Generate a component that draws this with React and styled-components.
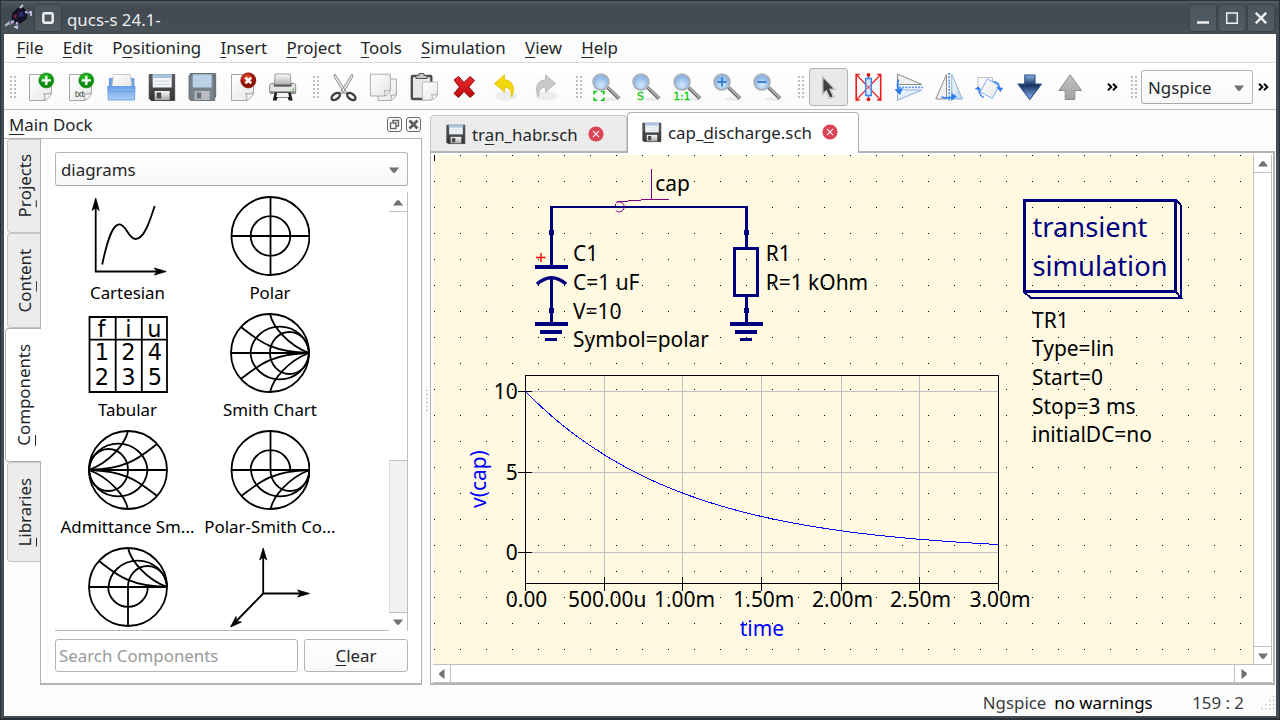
import React from "react";
import styled, { createGlobalStyle, css } from "styled-components";

const GlobalStyle = createGlobalStyle`
  * { box-sizing: border-box; }
  html, body { margin: 0; padding: 0; }
  body { font-family: "Noto Sans", sans-serif; font-size: 16.87px; line-height: 24px; color: #232629; }
  svg { display: block; flex: none; }
`;

/* ---------- window frame ---------- */

const Window = styled.div`
  width: 1280px;
  height: 720px;
  overflow: hidden;
  display: flex;
  flex-direction: column;
  background: #434d55;
  border: 1px solid #2a3036;
  border-bottom-width: 2px;
`;

const TitleBar = styled.header`
  flex: none;
  height: 33px;
  display: flex;
  align-items: center;
  padding: 0 4px 0 4px;
  background: linear-gradient(#59626a 0, #4a535b 2px, #41484f 9px, #485057 32px, #343b41 33px);
`;

const TitleButton = styled.div`
  width: 28px;
  height: 28px;
  margin-left: 1px;
  margin-top: 1px;
  border: 1px solid #3a444b;
  border-radius: 3px;
  background: linear-gradient(#4b555d, #515c64);
  display: flex;
  align-items: center;
  justify-content: center;
`;

const WindowTitle = styled.div`
  flex: 1;
  padding: 4px 0 0 5px;
  color: #eceef0;
`;

const Client = styled.div`
  flex: 1;
  margin: 0 3px 2px;
  display: flex;
  flex-direction: column;
  background: #fcfcfc;
  min-height: 0;
`;

/* ---------- menu ---------- */

const MenuBar = styled.nav`
  flex: none;
  height: 29px;
  display: flex;
  gap: 19.25px;
  padding: 2px 0 0 12.5px;
  border-bottom: 1px solid #dcdcdc;
`;

const Mnemonic = styled.span`
  text-decoration: underline;
  text-decoration-thickness: 1px;
  text-underline-offset: 3px;
  text-decoration-skip-ink: none;
`;

/* ---------- toolbar ---------- */

const ToolBars = styled.div`
  flex: none;
  height: 47px;
  display: flex;
  background: linear-gradient(#ffffff, #fafafa);
  border-bottom: 1px solid #bcbcbc;
`;

const ToolGroup = styled.div`
  width: ${(p) => p.$width}px;
  flex: none;
  display: flex;
  align-items: center;
  padding: 2px ${(p) => p.$right ?? 0}px 0 6px;
`;

const Grip = styled.div`
  width: 6px;
  height: 22px;
  margin-right: ${(p) => p.$after}px;
  background: radial-gradient(circle at 1px 1px, #bdbdbd 0.9px, transparent 1.2px) 0 0 / 4px 4px;
`;

const ToolButton = styled.div`
  width: 40.3px;
  height: 38px;
  flex: none;
  display: flex;
  align-items: center;
  justify-content: center;
  ${(p) =>
    p.$active &&
    css`
      width: 39px;
      margin: 0 0 0 1.3px;
      border: 1px solid #b4b4b4;
      border-radius: 3px;
      background: #e9e9e9;
    `}
`;

const Combo = styled.div`
  height: 34px;
  width: ${(p) => p.$width}px;
  flex: none;
  display: flex;
  align-items: center;
  justify-content: space-between;
  padding: 1px 8px 0 ${(p) => p.$pad ?? 6}px;
  border: 1px solid #b4b4b4;
  border-bottom-color: #a8a8a8;
  border-radius: 3px;
  background: linear-gradient(#ffffff, #f8f8f8);
`;

/* ---------- body ---------- */

const Body = styled.main`
  flex: 1;
  display: flex;
  min-height: 0;
`;

const Dock = styled.aside`
  width: 418px;
  flex: none;
  display: flex;
  flex-direction: column;
`;

const DockTitle = styled.div`
  height: 28px;
  flex: none;
  display: flex;
  align-items: center;
  padding: 1px 1px 0 5px;
`;

const DockName = styled.div`
  flex: 1;
  padding-top: 1px;
`;

const DockButton = styled.div`
  width: 15px;
  height: 15px;
  margin-left: 4px;
  border: 1px solid #6a6a6a;
  border-radius: 3px;
  display: flex;
  align-items: center;
  justify-content: center;
`;

const DockBody = styled.div`
  display: flex;
  height: 547px;
`;

const SideTabs = styled.div`
  width: 36px;
  flex: none;
  display: flex;
  flex-direction: column;
  align-items: flex-end;
  border-top: 1px solid #b4b4b4;
`;

const SideTab = styled.div`
  height: ${(p) => p.$height}px;
  width: ${(p) => (p.$active ? 36 : 33)}px;
  flex: none;
  display: flex;
  align-items: center;
  justify-content: center;
  border: 1px solid ${(p) => (p.$active ? "#b0b0b0" : "#c6c6c6")};
  border-right: 0;
  border-radius: 4px 0 0 4px;
  background: ${(p) => (p.$active ? "#ffffff" : "#ececec")};
  margin-right: ${(p) => (p.$active ? -1 : 0)}px;
  z-index: 1;
  padding-left: ${(p) => (p.$active ? 0 : 2)}px;
`;

const SideLabel = styled.span`
  writing-mode: vertical-rl;
  transform: rotate(180deg);
`;

const DockPane = styled.div`
  flex: 1;
  display: flex;
  flex-direction: column;
  background: #fff;
  border: 1px solid #b4b4b4;
  border-bottom: 2px solid #b4b4b4;
  padding: 13px 13px 10px 14px;
`;

const ListArea = styled.div`
  display: flex;
  height: 439px;
  margin: 6px 0 8px;
`;

const ComponentGrid = styled.div`
  width: 334px;
  padding: 2px 0 0 1px;
  overflow: hidden;
  display: grid;
  grid-template-columns: 143px 142px;
  grid-auto-rows: 117px;
  border-bottom: 1px solid #b8b8b8;
  color: #000;
`;

const ComponentItem = styled.div`
  display: flex;
  flex-direction: column;
  align-items: center;
  white-space: nowrap;
  padding-top: 2px;
`;

const ComponentLabel = styled.div`
  padding-top: 5px;
`;

const VScroll = styled.div`
  width: 19px;
  flex: none;
  display: flex;
  flex-direction: column;
  border-right: 1px solid #c0c0c0;
  border-left: ${(p) => (p.$line ? "1px solid #c0c0c0" : "0")};
  background: #fff;
`;

const ScrollStep = styled.div`
  height: ${(p) => p.$height}px;
  flex: none;
  display: flex;
  align-items: center;
  justify-content: center;
  border: 0 solid #c0c0c0;
  border-${(p) => p.$edge}-width: 1px;
  padding-top: ${(p) => p.$shift ?? 0}px;
`;

const ScrollThumb = styled.div`
  height: ${(p) => p.$height}px;
  background: #f1f1f1;
  border-top: 1px solid #c0c0c0;
  border-left: 1px solid #dcdcdc;
`;

const Spacer = styled.div`
  flex: 1;
`;

const SearchRow = styled.div`
  display: flex;
  gap: 6px;
`;

const SearchField = styled.div`
  width: 243px;
  height: 33px;
  border: 1px solid #b4b4b4;
  border-radius: 3px;
  padding: 4px 3px;
  color: #9a9a9a;
`;

const PushButton = styled.div`
  width: 104px;
  height: 33px;
  border: 1px solid #b4b4b4;
  border-radius: 3px;
  background: linear-gradient(#fff, #f8f8f8);
  display: flex;
  align-items: center;
  justify-content: center;
`;

const Splitter = styled.div`
  width: 8px;
  flex: none;
  display: flex;
  justify-content: center;
  padding: 280px 0 0 2px;
`;

const SplitGrip = styled.div`
  width: 2px;
  height: 21px;
  background: repeating-linear-gradient(#bdbdbd 0 1px, transparent 1px 4px);
`;

const Editor = styled.section`
  flex: 1;
  display: flex;
  flex-direction: column;
  min-width: 0;
`;

const TabRow = styled.div`
  height: 41px;
  flex: none;
  display: flex;
  align-items: flex-end;
`;

const FileTab = styled.div`
  width: ${(p) => p.$width}px;
  height: ${(p) => (p.$active ? 41 : 36)}px;
  display: flex;
  align-items: center;
  padding: 0 0 ${(p) => (p.$active ? 2 : 0)}px ${(p) => (p.$active ? 14 : 15)}px;
  border: 1px solid ${(p) => (p.$active ? "#b0b0b0" : "#c6c6c6")};
  border-bottom: 0;
  border-radius: 4px 4px 0 0;
  background: ${(p) => (p.$active ? "#ffffff" : "#ececec")};
  margin-bottom: ${(p) => (p.$active ? -2 : 0)}px;
  z-index: ${(p) => (p.$active ? 1 : 0)};
`;

const FileName = styled.span`
  padding: 2px 10px 0 6px;
`;

const EditorPane = styled.div`
  width: 845px;
  height: 534px;
  flex: none;
  display: flex;
  flex-direction: column;
  background: #fff;
  border: 2px solid #b4b4b4;
  border-left-width: 1px;
  padding: 2px 1px 0 2px;
`;

const CanvasRow = styled.div`
  display: flex;
  height: 509px;
  flex: none;
`;

const HScroll = styled.div`
  flex: 1;
  display: flex;
  border-top: 1px solid #c0c0c0;
  border-bottom: 1px solid #c0c0c0;
`;

const HStep = styled.div`
  width: 18px;
  display: flex;
  align-items: center;
  justify-content: center;
  border: 0 solid #c0c0c0;
  border-${(p) => p.$edge}-width: 1px;
`;

const ScrollCorner = styled.div`
  width: 20px;
`;

const StatusBar = styled.footer`
  height: 30px;
  flex: none;
  display: flex;
  align-items: center;
  justify-content: flex-end;
  padding: 4px 1px 0 0;
`;

const StatusText = styled.span`
  margin-right: ${(p) => p.$after}px;
  color: ${(p) => (p.$strong ? "#000" : "#3a3d40")};
`;

/* ---------- shared gradients ---------- */

const Defs = styled.svg`
  position: absolute;
`;

const stops = (a, b) => (
  <>
    <stop offset="0" stopColor={a} />
    <stop offset="1" stopColor={b} />
  </>
);

const Gradients = () => (
  <Defs width="0" height="0">
    <defs>
      <linearGradient id="page" x1="0" y1="0" x2="1" y2="1">{stops("#ffffff", "#e6e6e6")}</linearGradient>
      <radialGradient id="green" cx="0.45" cy="0.3">{stops("#2cc628", "#0a8e0c")}</radialGradient>
      <radialGradient id="red" cx="0.4" cy="0.3">{stops("#f0502a", "#8d0c04")}</radialGradient>
      <linearGradient id="tray" x1="0" y1="0" x2="0" y2="1">{stops("#6ca2e8", "#a9cdf8")}</linearGradient>
      <linearGradient id="dark" x1="0" y1="0" x2="0" y2="1">{stops("#5e5e5e", "#333333")}</linearGradient>
      <linearGradient id="silver" x1="0" y1="0" x2="0" y2="1">{stops("#fafafa", "#a9a9a9")}</linearGradient>
      <radialGradient id="lens" cx="0.5" cy="0.7">{stops("#d6e9fb", "#8fb9e8")}</radialGradient>
      <linearGradient id="cross" x1="0" y1="0" x2="0" y2="1">{stops("#f0282a", "#b80c10")}</linearGradient>
      <linearGradient id="blueArrow" x1="0" y1="0" x2="0" y2="1">
        <stop offset="0" stopColor="#8ab0dc" />
        <stop offset=".42" stopColor="#16335f" />
        <stop offset="1" stopColor="#8ab8ff" />
      </linearGradient>
      <linearGradient id="greyArrow" x1="0" y1="0" x2="0" y2="1">{stops("#c2c2c2", "#a2a2a2")}</linearGradient>
      <linearGradient id="sky" x1="0" y1="0" x2="1" y2="1">{stops("#ffffff", "#b9d3f0")}</linearGradient>
    </defs>
  </Defs>
);

/* ---------- toolbar icons ---------- */

const Icon = ({ children, size = 28 }) => (
  <svg width={size} height={size} viewBox="0 0 28 28" fill="none" overflow="visible">
    {children}
  </svg>
);

const PageShape = () => (
  <>
    <path d="M1.5 1.5H23.5V20L16 27.5H1.5Z" fill="url(#page)" stroke="#a8a8a8" />
    <path d="M16 27.5C17.5 24.5 17 22 15.5 20.5C19 21.5 22 21 23.5 19.5C23 23 19.5 26.8 16 27.5Z" fill="#f4f4f4" stroke="#8e8e8e" strokeWidth=".8" />
  </>
);

const NewIcon = ({ txt }) => (
  <Icon>
    <PageShape />
    {txt && <text x="7" y="24" fontSize="8.5" fill="#333" fontFamily="Liberation Sans">txt</text>}
    <circle cx="18.3" cy="7.4" r="7.5" fill="url(#green)" stroke="#0b860c" strokeWidth=".6" />
    <path d="M18.3 2.8V12M13.7 7.4H22.9" stroke="#fff" strokeWidth="2.4" />
  </Icon>
);

const OpenIcon = () => (
  <Icon>
    <g transform="translate(-1.6 0)">
      <path d="M2 5.5H8V16H2ZM20 5.5H26.5V16H20Z" fill="#6ea3e6" stroke="#4f8ad8" strokeWidth=".8" />
      <path d="M6 1.5H23L24.5 14H4.5Z" fill="url(#page)" stroke="#bdbdbd" strokeWidth=".8" />
      <path d="M.3 13.5H27.7L27 27H1Z" fill="url(#tray)" stroke="#5b93df" strokeWidth=".8" />
      <path d="M1.5 18.5H26.5" stroke="#5a94e2" opacity=".5" />
    </g>
  </Icon>
);

const Floppy = ({ blue, size }) => (
  <Icon size={size}>
    <g transform={size ? undefined : "translate(-.8 0)"}>
      {blue && <path d="M2 .5H27.5V24H2Z" fill="#7e8890" stroke="#555c62" strokeWidth=".8" />}
      <path d={blue ? "M.8 2.5H26.5V27.5H2.5L.8 25.8Z" : "M1 1.5H26.5V27.5H2.8L1 25.7Z"} fill={blue ? "#78828a" : "url(#dark)"} stroke={blue ? "#5c646b" : "#3b3b3b"} strokeWidth=".8" />
      <path d="M4.5 1.5H23.5V14.5H4.5Z" fill={blue ? "#b9d0e6" : "#f1f5f9"} />
      {!blue && <path d="M4.5 1.5H23.5V5H4.5Z" fill="#a8c3de" />}
      {!blue && <path d="M6.5 8H21.5M6.5 11.5H21.5" stroke="#cfd6dd" />}
      <path d="M6.5 18H21.5V27H6.5Z" fill={blue ? "#b8bcc0" : "url(#silver)"} />
      <path d="M8.5 19.5H13V25.5H8.5Z" fill={blue ? "#6a7178" : "#4a4a4a"} />
    </g>
  </Icon>
);

const ClosePageIcon = () => (
  <Icon>
    <PageShape />
    <circle cx="18.3" cy="7.4" r="7.6" fill="url(#red)" stroke="#8c1208" strokeWidth=".6" />
    <path d="M15.4 4.5L21.2 10.3M21.2 4.5L15.4 10.3" stroke="#fff" strokeWidth="2.6" />
  </Icon>
);

const PrintIcon = () => (
  <Icon>
    <g transform="translate(-1.3 0)">
      <path d="M6.5 1H21.5L22.5 13H5.5Z" fill="url(#silver)" stroke="#8a8a8a" strokeWidth=".8" />
      <path d="M1 12.5C1 11 2 10.5 3 10.5H5.5V13H22.5V10.5H25C26 10.5 27 11 27 12.5V19H1Z" fill="#e4e4e4" stroke="#6a6a6a" strokeWidth=".8" />
      <path d="M5.5 11.5H22.5V13.5H5.5Z" fill="#5a5a5a" />
      <path d="M1 18.5H27V21H1Z" fill="#8a8a8a" />
      <path d="M6 19.5H22L24 27.5H20L19 24.5H9L8 27.5H4Z" fill="#1e1e1e" />
      <path d="M8.5 20H19.5L20.5 24H7.5Z" fill="#f4f4f4" />
      <circle cx="24.5" cy="16.5" r=".9" fill="#5cab4a" />
    </g>
  </Icon>
);

const CutIcon = () => (
  <Icon>
    <g transform="translate(.5 0)">
      <path d="M5.5 1L17.5 20L14.5 20.5L4.5 3.5ZM22.5 1L10.5 20L13.5 20.5L23.5 3.5Z" fill="#e6e6e6" stroke="#7a7a7a" strokeWidth=".8" />
      <ellipse cx="6.2" cy="23.5" rx="4.7" ry="2.7" transform="rotate(-35 6.2 23.5)" stroke="#3c4044" strokeWidth="2.4" />
      <ellipse cx="21.8" cy="23.5" rx="4.7" ry="2.7" transform="rotate(35 21.8 23.5)" stroke="#3c4044" strokeWidth="2.4" />
    </g>
  </Icon>
);

const CopyIcon = () => (
  <Icon>
    <path d="M8 6H26.5V21L20.5 27.5H8Z" fill="url(#page)" stroke="#a4a4a4" strokeWidth=".9" />
    <path d="M.4 1.2H20.4V17L14.6 23H.4Z" fill="url(#page)" stroke="#a4a4a4" strokeWidth=".9" />
    <path d="M14.1 23C15.6 20.5 15.1 19 14.1 17.5C17.1 18.5 19.1 18 20.4 16.5C20.1 19.5 17.6 22.5 14.1 23ZM20.5 27.5C22 25 21.5 23.5 20.5 22C23.5 23 25 22 26.5 20.5C26 24 23.5 27 20.5 27.5Z" fill="#f5f5f5" stroke="#999" strokeWidth=".8" />
  </Icon>
);

const PasteIcon = () => (
  <Icon>
    <rect x="1.8" y="3" width="19.5" height="23" rx="1" fill="#e6e6e6" stroke="#4b4f52" strokeWidth="2.4" />
    <path d="M6 5.5V2.5H9V.5H14V2.5H17V5.5Z" fill="#c8c8c8" stroke="#555" />
    <path d="M12.5 9H27.5V21L21.5 27H12.5Z" fill="url(#page)" stroke="#b0b0b0" strokeWidth=".8" />
    <path d="M21.5 27C23 25 22.5 23 21.5 21.5C24 22.5 26 22 27.5 20.5C27 24 24.5 26.5 21.5 27Z" fill="#fff" stroke="#999" strokeWidth=".8" />
  </Icon>
);

const DeleteIcon = () => (
  <Icon>
    <path d="M4 7L8.5 3.5L14 9.5L20 3.5L24.5 7.5L18.8 14L24.5 20.5L20 24.5L14 18.5L8.5 24.5L4 20.5L9.5 14Z" fill="url(#cross)" stroke="#8a0a0d" strokeLinejoin="round" />
  </Icon>
);

const UndoIcon = ({ redo }) => (
  <Icon>
    <ellipse cx="15" cy="23" rx="11" ry="4.5" fill="#000" opacity=".06" />
    <g transform={redo ? "translate(28 0) scale(-1 1)" : undefined}>
      <path
        d="M3.5 10.5L13.5 1.8V6.8C21.5 7.2 25 15 20.5 24C20.5 17.5 18.5 14.5 13.5 14.2V19.2Z"
        fill={redo ? "#c9c9c9" : "#f2d60c"}
        stroke={redo ? "#b0b0b0" : "#dfc000"}
        strokeWidth=".8"
        strokeLinejoin="round"
      />
    </g>
  </Icon>
);

const ZoomIcon = ({ mark }) => (
  <Icon>
    <ellipse cx="20" cy="26" rx="8" ry="2" fill="#000" opacity=".06" />
    <path d="M15.5 14.5L27 25.5" stroke="#6f6f6f" strokeWidth="3.8" />
    <path d="M16 14.5L27 25" stroke="#b5b5b5" strokeWidth="1.6" />
    <circle cx="9" cy="9" r="7.8" fill="url(#lens)" stroke="#a9afb4" strokeWidth="1.8" />
    {(mark === "plus" || mark === "minus") && <path d="M4.5 9H13.5" stroke="#2e7ad8" strokeWidth="1.8" />}
    {mark === "plus" && <path d="M9 4.5V13.5" stroke="#2e7ad8" strokeWidth="1.8" />}
    {mark === "fit" && (
      <path d="M2.2 21.5V18.5H5.2M8.8 18.5H11.8V21.5M11.8 24.5V27.3H8.8M5.2 27.3H2.2V24.5" stroke="#0ecb0e" strokeWidth="1.6" />
    )}
    {mark === "S" && <text x="5" y="26.8" fontSize="11" fill="#0ecb0e" stroke="#0ecb0e" strokeWidth=".3" fontFamily="DejaVu Sans">S</text>}
    {mark === "1:1" && <text x=".3" y="26.8" fontSize="11" fill="#0ecb0e" stroke="#0ecb0e" strokeWidth=".3" fontFamily="DejaVu Sans" letterSpacing="-.3">1:1</text>}
  </Icon>
);

const PointerIcon = () => (
  <Icon>
    <g transform="translate(-1 1)">
      <path d="M8.5 2L21.5 15.5H16.5L20 23L15.5 25L12 17.8L8.5 21Z" fill="#fff" stroke="#9a9a9a" strokeWidth=".6" />
      <path d="M9.3 4L19.6 14.7H15.2L18.7 22.4L16 23.6L12.4 16.1L9.3 19Z" fill="#3f4143" />
    </g>
  </Icon>
);

const DeactivateIcon = () => (
  <Icon>
    <g transform="translate(.7 0)">
      <path d="M5 1.5H1.5V27H5M22.5 1.5H26V27H22.5" stroke="#f01818" strokeWidth="1.6" />
      <path d="M1.5 1.5L26 27M26 1.5L1.5 27" stroke="#f01818" strokeWidth="1.1" />
      <path d="M13.8 3V7M13.8 21.5V25.5" stroke="#3a7fe0" strokeWidth="1.4" />
      <rect x="11" y="5.5" width="5.6" height="17" fill="#cfe2fb" fillOpacity=".8" stroke="#3d86ea" strokeWidth="1.5" />
      <path d="M12 16L15.8 12.2M12.2 12.4L15.5 15.8" stroke="#f01818" strokeWidth=".8" />
      <circle cx="13.8" cy="2" r="1.9" fill="#e31414" />
      <circle cx="13.8" cy="26.3" r="1.9" fill="#e31414" />
    </g>
  </Icon>
);

const MirrorXIcon = () => (
  <Icon>
    <path d="M2.5 1L27 11.5H2.5Z" fill="#f0f0f0" stroke="#8c8c8c" />
    <path d="M2.5 27.3L27 17H2.5Z" fill="url(#sky)" stroke="#8fb0d8" />
    <path d="M4 14.3H28" stroke="#5695f5" strokeWidth="1.8" strokeDasharray="2 1.2" />
    <path d="M3.5 6.5C1.8 11 2 14 4.2 18" stroke="#2c7df0" strokeWidth="1.8" />
    <path d="M-.5 16.5L8 15L5 22Z" fill="#2c7df0" />
  </Icon>
);

const MirrorYIcon = () => (
  <Icon>
    <path d="M11.5 1.5V26H.8Z" fill="#f0f0f0" stroke="#8c8c8c" />
    <path d="M16.8 1.5V26H27.3Z" fill="url(#sky)" stroke="#8fb0d8" />
    <path d="M14.2 0V28" stroke="#5695f5" strokeWidth="1.8" strokeDasharray="2 1.2" />
    <path d="M6.5 24C11 25.6 15 25.2 18 24" stroke="#2c7df0" strokeWidth="1.8" />
    <path d="M16.5 20L22 23.5L16 28Z" fill="#2c7df0" />
  </Icon>
);

const RotateIcon = () => (
  <Icon>
    <path d="M3 4.5H17.5V19H3Z" fill="url(#page)" stroke="#c0c0c0" />
    <path d="M12.5 6L24 12.5L17.5 25.5L5 19Z" fill="url(#page)" stroke="#7eaef0" />
    <path d="M18.5 8.5C22 9 24 11 24.5 14.5M9 24.5C6 23.5 4.3 21 3.8 16.5" stroke="#2c7df0" strokeWidth="1.3" />
    <path d="M21 13.5L28 15L25.5 19ZM-.5 16L3.5 13.5L6.5 17.5Z" fill="#2c7df0" />
  </Icon>
);

const LevelIcon = ({ down }) => (
  <Icon>
    {down ? (
      <path d="M8.8 2H19V11H25.5L13.8 26.5L2 11H8.8Z" fill="url(#blueArrow)" stroke="#2c4f86" strokeWidth="1.1" strokeLinejoin="round" />
    ) : (
      <path d="M9.2 26.5H18.8V17.5H25.5L14.2 1.8L2.8 17.5H9.2Z" fill="url(#greyArrow)" stroke="#8e8e8e" strokeLinejoin="round" />
    )}
  </Icon>
);

const Chevrons = () => (
  <svg width="11" height="8" viewBox="0 0 11 8" fill="none">
    <path d="M1 .8L4.3 4L1 7.2M6 .8L9.3 4L6 7.2" stroke="#000" strokeWidth="1.9" />
  </svg>
);

const Triangle = ({ dir = "down" }) => {
  const angle = { down: 0, left: 90, up: 180, right: 270 }[dir];
  return (
    <svg width="10" height="10" viewBox="0 0 10 10">
      <path d="M0 2.5H10L6 7.8H4Z" fill="#6f7274" transform={`rotate(${angle} 5 5)`} />
    </svg>
  );
};

const CloseDot = () => (
  <svg width="16" height="16" viewBox="0 0 16 16" fill="none">
    <circle cx="8" cy="8" r="7.6" fill="#da4453" />
    <path d="M4.9 4.9L11.1 11.1M11.1 4.9L4.9 11.1" stroke="#fff" strokeWidth="1.1" />
  </svg>
);

/* ---------- component list icons ---------- */

const Sketch = ({ children }) => (
  <svg width="80" height="80" viewBox="0 0 80 80" fill="none" stroke="#000" strokeWidth="1.8">
    {children}
  </svg>
);

const SmithLower = () => (
  <>
    <path d="M20.5 40A29.3 28 0 0 0 79 40" />
    <path d="M40 40A19.5 21 0 0 0 79 40" />
    <path d="M40 79C43 66 58 48 79 40" />
    <path d="M11 66C28 53 40 41 79 40" />
  </>
);
const SmithUpper = () => <g transform="translate(0 80) scale(1 -1)"><SmithLower /></g>;

const FullSmith = () => (
  <>
    <circle cx="40" cy="40" r="39" />
    <path d="M1 40H79" />
    <SmithLower />
    <SmithUpper />
  </>
);

const sketches = {
  cartesian: (
    <Sketch>
      <g transform="translate(-.8 0)">
        <path d="M8.5 6V75.5H74" />
        <path d="M8.5 2L12 14.5L8.5 11.5L5 14.5ZM79 75.5L67 72L70 75.5L67 79Z" fill="#000" strokeWidth=".8" />
        <path d="M15 68.5C21 40 26 28 32.5 28.3C39 28.5 41 43 48.5 43C57 43 63 24 67.5 10" />
      </g>
    </Sketch>
  ),
  polar: (
    <Sketch>
      <circle cx="40.5" cy="40" r="39" />
      <circle cx="40.5" cy="40" r="19.8" />
      <path d="M40.5 1V79M1.5 40H79.5" />
    </Sketch>
  ),
  tabular: (
    <Sketch>
      <path d="M1.5 4H79V79H1.5ZM27.7 4V79M53.8 4V79M1.5 26.7H79" />
      <g stroke="none" fill="#000" fontFamily="DejaVu Sans" fontSize="22.5" textAnchor="middle">
        <text x="13.5" y="23.5">f</text>
        <text x="40.5" y="23.5">i</text>
        <text x="66.5" y="23.5">u</text>
        <text x="14" y="47">1</text>
        <text x="40.3" y="47">2</text>
        <text x="66.8" y="47">4</text>
        <text x="14" y="71.7">2</text>
        <text x="40.3" y="71.7">3</text>
        <text x="66.8" y="71.7">5</text>
      </g>
    </Sketch>
  ),
  smith: <Sketch><FullSmith /></Sketch>,
  admittance: (
    <Sketch>
      <g transform="translate(80 0) scale(-1 1)"><FullSmith /></g>
    </Sketch>
  ),
  polarSmith: (
    <Sketch>
      <g transform="translate(.5 0)">
        <circle cx="40" cy="40" r="39" />
        <path d="M1 40H79M40 1V40M20.2 40A19.8 19.8 0 0 1 59.8 40" />
        <SmithLower />
      </g>
    </Sketch>
  ),
  smithPolar: (
    <Sketch>
      <circle cx="40" cy="40" r="39" />
      <path d="M1 40H79M40 40V79M20.2 40A19.8 19.8 0 0 0 59.8 40" />
      <SmithUpper />
    </Sketch>
  ),
  space: (
    <Sketch>
      <path d="M33.2 5V46.5H75M33.2 46.5L4 76.5" />
      <path d="M33.2 1L36.7 13L33.2 10L29.7 13ZM79.5 46.5L67.5 43L70.5 46.5L67.5 50ZM.5 80L6 69.5L6.5 74.5L11.5 75Z" fill="#000" strokeWidth=".8" />
    </Sketch>
  ),
};

const componentItems = [
  ["cartesian", "Cartesian"],
  ["polar", "Polar"],
  ["tabular", "Tabular"],
  ["smith", "Smith Chart"],
  ["admittance", "Admittance Sm..."],
  ["polarSmith", "Polar-Smith Co..."],
  ["smithPolar", ""],
  ["space", ""],
];

/* ---------- schematic ---------- */

const NAVY = "#00007f";

const xTicks = [
  [525.5, "0.00", 505.8],
  [604.5, "500.00u", 568],
  [682.5, "1.00m", 654],
  [761.5, "1.50m", 733.3],
  [841.5, "2.00m", 812],
  [919.5, "2.50m", 890],
  [998.5, "3.00m", 969.5],
];
const yTicks = [
  [391.5, "10"],
  [472.5, "5"],
  [552.5, "0"],
];

const dischargePath = Array.from({ length: 61 }, (_, i) => {
  const t = (i / 60) * 3;
  const x = 525.5 + t * 157.67;
  const y = 552.5 - 161 * Math.exp(-t);
  return `${i ? "L" : "M"}${x.toFixed(1)} ${y.toFixed(1)}`;
}).join("");

const Ground = ({ x }) => (
  <>
    <path d={`M${x - 16.5} 324H${x + 16.5}`} strokeWidth="4" />
    <path d={`M${x - 11.5} 332H${x + 10.5}`} strokeWidth="4" />
    <path d={`M${x - 6.5} 339.5H${x + 5.5}`} strokeWidth="3" />
  </>
);

const Node = ({ x, y }) => <rect x={x - 2.5} y={y - 2.5} width="5" height="5" fill={NAVY} stroke="none" />;

const Lines = ({ x, rows }) =>
  rows.map(([y, text]) => (
    <text key={text} x={x} y={y}>{text}</text>
  ));

const Schematic = () => (
  <svg width="820" height="509" viewBox="433 155 820 509" fill="none">
    <defs>
      <pattern id="dots" x="434" y="155" width="26" height="26" patternUnits="userSpaceOnUse">
        <rect width="1" height="1" fill="#000" />
      </pattern>
    </defs>
    <rect x="433" y="155" width="820" height="509" fill="#fff9e1" />
    <rect x="433" y="155" width="820" height="509" fill="url(#dots)" />
    <path d="M434.5 155V161" stroke="#000" />

    <g shapeRendering="crispEdges">
      <g stroke="#c0c0c0">
        {xTicks.slice(1, 6).map(([x]) => <path key={x} d={`M${x} 376V583`} />)}
        {yTicks.map(([y]) => <path key={y} d={`M526 ${y}H998`} />)}
      </g>
      <g stroke="#000">
        <rect x="525.5" y="375.5" width="473" height="208" />
        {xTicks.map(([x], i) => <path key={x} d={`M${x} ${i % 6 ? 577 : 583}V591`} />)}
        {yTicks.map(([y]) => <path key={y} d={`M518 ${y}H532`} />)}
      </g>
      <path d={dischargePath} stroke="#0000ff" />
      <g stroke="#800080">
        <path d="M651.5 169V199M641 199.5H669M628 200.5H641M617 201.5H628" />
      </g>
      <g stroke={NAVY}>
        <path d="M550.5 207H747.5" strokeWidth="2" />
        <path d="M551.5 206V232M746.5 206V232" strokeWidth="3" />
        <path d="M551.5 232V267M551.5 278V324M746.5 232V248M746.5 296V324" strokeWidth="3" />
        <path d="M535 267H568" strokeWidth="4" />
        <rect x="734.5" y="248.5" width="23" height="47" strokeWidth="3" />
        <Ground x={551.5} />
        <Ground x={746.5} />
        <Node x={551.5} y={232.5} />
        <Node x={551.5} y={310.5} />
        <Node x={746.5} y={232.5} />
        <Node x={746.5} y={310.5} />
        <rect x="1024.5" y="200.5" width="151" height="91" strokeWidth="3" />
        <path d="M1176 200L1181 205.5V298.5" strokeWidth="2" />
        <path d="M1024 292L1031 298H1181L1176 292" strokeWidth="2" />
      </g>
    </g>
    <path d="M541 253V262M536 257.5H545.5" stroke="#ff0000" strokeWidth="1.4" />
    <path d="M616 202.5C618 201.5 621 201.5 623 203.5C625 206 624.5 210 621 211.5C619 212.3 617 211.5 615.8 210.5M615.5 206V204" stroke="#800080" />
    <path d="M537 284Q551.5 271.5 566 284" stroke={NAVY} strokeWidth="3.6" />

    <g fill="#000" fontSize="20.95">
      <text x="655.3" y="191.3">cap</text>
      <Lines x={573} rows={[[261, "C1"], [290, "C=1 uF"], [319, "V=10"], [347, "Symbol=polar"]]} />
      <Lines x={765.7} rows={[[261, "R1"], [290, "R=1 kOhm"]]} />
      <Lines
        x={1032}
        rows={[[328, "TR1"], [356, "Type=lin"], [385, "Start=0"], [414, "Stop=3 ms"], [442, "initialDC=no"]]}
      />
      {xTicks.map(([, label, x]) => <text key={label} x={x} y="607">{label}</text>)}
      {yTicks.map(([y, label]) => <text key={label} x="517.8" y={y + 7.5} textAnchor="end">{label}</text>)}
    </g>
    <g fill="#0000ff" fontSize="20.95">
      <text x="739.8" y="636">time</text>
      <text transform="translate(485.5 508) rotate(-90)">v(cap)</text>
    </g>
    <g fill={NAVY} fontSize="27.3">
      <text x="1032.4" y="237">transient</text>
      <text x="1032.4" y="276">simulation</text>
    </g>
  </svg>
);

/* ---------- page ---------- */

const menus = [
  ["", "F", "ile"],
  ["", "E", "dit"],
  ["P", "o", "sitioning"],
  ["", "I", "nsert"],
  ["", "P", "roject"],
  ["", "T", "ools"],
  ["", "S", "imulation"],
  ["", "V", "iew"],
  ["", "H", "elp"],
];

const Label = ({ parts: [before, key, after] }) => (
  <>
    {before}
    <Mnemonic>{key}</Mnemonic>
    {after}
  </>
);

const toolGroups = [
  { width: 303, after: 6, icons: [<NewIcon />, <NewIcon txt />, <OpenIcon />, <Floppy />, <Floppy blue />, <ClosePageIcon />, <PrintIcon />] },
  { width: 263, after: 4.3, icons: [<CutIcon />, <CopyIcon />, <PasteIcon />, <DeleteIcon />, <UndoIcon />, <UndoIcon redo />] },
  { width: 222, after: 4, icons: ["fit", "S", "1:1", "plus", "minus"].map((m) => <ZoomIcon mark={m} />) },
  {
    width: 333,
    after: 4,
    right: 7,
    active: 0,
    more: true,
    icons: [<PointerIcon />, <DeactivateIcon />, <MirrorXIcon />, <MirrorYIcon />, <RotateIcon />, <LevelIcon down />, <LevelIcon />],
  },
];

const AppIcon = () => (
  <svg width="28" height="28" viewBox="0 0 28 28" fill="none">
    <path d="M8 9L12 5L18 4L22 8L21 15L15 19L9 18L7 14Z" fill="#15142c" stroke="#0c0b1d" />
    <path d="M8 12L12 10L11 15Z" fill="#7a1f3c" />
    <path d="M13 9L17 7L19 12L14 13Z" fill="#2c2b62" />
    <path d="M15 4L18 1M20 8L26 9M26 7V12" stroke="#c3c2dd" strokeWidth="1.8" />
    <path d="M9 17L4 20M0 22L5 18M12 18V25M9 23H13" stroke="#b9b8d6" strokeWidth="2.2" />
    <path d="M22 6L24 10M4 16L6 21M12 20V22" stroke="#66658c" strokeWidth="1.4" />
  </svg>
);

export default function App() {
  return (
    <>
      <GlobalStyle />
      <Gradients />
      <Window>
        <TitleBar>
          <AppIcon />
          <TitleButton>
            <svg width="12" height="12" viewBox="0 0 12 12">
              <rect x="1.3" y="1.3" width="9.4" height="9.4" rx="1.5" fill="none" stroke="#f0f0f0" strokeWidth="2.4" />
            </svg>
          </TitleButton>
          <WindowTitle>qucs-s 24.1-</WindowTitle>
          <TitleButton>
            <svg width="12" height="12" viewBox="0 0 12 12"><path d="M0 10.5H12" stroke="#f2f2f2" strokeWidth="2.4" /></svg>
          </TitleButton>
          <TitleButton>
            <svg width="12" height="12" viewBox="0 0 12 12"><path d="M.7 1H11.3V11.3H.7ZM0 1H12" fill="none" stroke="#f2f2f2" strokeWidth="1.5" /></svg>
          </TitleButton>
          <TitleButton>
            <svg width="12" height="12" viewBox="0 0 12 12"><path d="M.8 .8L11.2 11.2M11.2 .8L.8 11.2" stroke="#f2f2f2" strokeWidth="2.3" /></svg>
          </TitleButton>
        </TitleBar>
        <Client>
          <MenuBar>
            {menus.map((m) => (
              <span key={m.join("")}><Label parts={m} /></span>
            ))}
          </MenuBar>
          <ToolBars>
            {toolGroups.map((g) => (
              <ToolGroup key={g.width} $width={g.width} $right={g.right}>
                <Grip $after={g.after} />
                {g.icons.map((icon, i) => (
                  <ToolButton key={i} $active={g.active === i}>{icon}</ToolButton>
                ))}
                {g.more && (
                  <>
                    <Spacer />
                    <Chevrons />
                  </>
                )}
              </ToolGroup>
            ))}
            <ToolGroup $width={151} $right={7}>
              <Grip $after={4} />
              <Combo $width={112}>
                Ngspice
                <Triangle />
              </Combo>
              <Spacer />
              <Chevrons />
            </ToolGroup>
          </ToolBars>
          <Body>
            <Dock>
              <DockTitle>
                <DockName><Label parts={["", "M", "ain Dock"]} /></DockName>
                <DockButton>
                  <svg width="11" height="11" viewBox="0 0 11 11" fill="none" stroke="#666" strokeWidth="1.4">
                    <path d="M4 3.5V1.5H9.5V7H7.5" />
                    <rect x="1.5" y="4" width="5.5" height="5.5" />
                  </svg>
                </DockButton>
                <DockButton>
                  <svg width="11" height="11" viewBox="0 0 11 11" stroke="#5c5c5c" strokeWidth="2.8">
                    <path d="M1.5 1.5L9.5 9.5M9.5 1.5L1.5 9.5" />
                  </svg>
                </DockButton>
              </DockTitle>
              <DockBody>
                <SideTabs>
                  <SideTab $height={94}><SideLabel><Label parts={["P", "r", "ojects"]} /></SideLabel></SideTab>
                  <SideTab $height={95}><SideLabel><Label parts={["Co", "n", "tent"]} /></SideLabel></SideTab>
                  <SideTab $height={134} $active><SideLabel><Label parts={["", "C", "omponents"]} /></SideLabel></SideTab>
                  <SideTab $height={100}><SideLabel><Label parts={["", "L", "ibraries"]} /></SideLabel></SideTab>
                </SideTabs>
                <DockPane>
                  <Combo $width={353} $pad={5}>
                    diagrams
                    <Triangle />
                  </Combo>
                  <ListArea>
                    <ComponentGrid>
                      {componentItems.map(([id, label]) => (
                        <ComponentItem key={id}>
                          {sketches[id]}
                          <ComponentLabel>{label}</ComponentLabel>
                        </ComponentItem>
                      ))}
                    </ComponentGrid>
                    <VScroll>
                      <ScrollStep $height={20} $shift={2} $edge="bottom"><Triangle dir="up" /></ScrollStep>
                      <Spacer />
                      <ScrollThumb $height={152} />
                      <ScrollStep $height={19} $edge="top"><Triangle /></ScrollStep>
                    </VScroll>
                  </ListArea>
                  <SearchRow>
                    <SearchField>Search Components</SearchField>
                    <PushButton><span><Label parts={["", "C", "lear"]} /></span></PushButton>
                  </SearchRow>
                </DockPane>
              </DockBody>
            </Dock>
            <Splitter><SplitGrip /></Splitter>
            <Editor>
              <TabRow>
                <FileTab $width={197}>
                  <Floppy size={20} />
                  <FileName><Label parts={["tr", "a", "n_habr.sch"]} /></FileName>
                  <CloseDot />
                </FileTab>
                <FileTab $width={232} $active>
                  <Floppy size={20} />
                  <FileName><Label parts={["cap_", "d", "ischarge.sch"]} /></FileName>
                  <CloseDot />
                </FileTab>
              </TabRow>
              <EditorPane>
                <CanvasRow>
                  <Schematic />
                  <VScroll $line>
                    <ScrollStep $height={18} $shift={1} $edge="bottom"><Triangle dir="up" /></ScrollStep>
                    <Spacer />
                    <ScrollStep $height={18} $edge="top"><Triangle /></ScrollStep>
                  </VScroll>
                </CanvasRow>
                <HScroll>
                  <HStep $edge="right"><Triangle dir="left" /></HStep>
                  <Spacer />
                  <HStep $edge="left"><Triangle dir="right" /></HStep>
                  <ScrollCorner />
                </HScroll>
              </EditorPane>
            </Editor>
          </Body>
          <StatusBar>
            <StatusText $after={8}>Ngspice</StatusText>
            <StatusText $strong $after={39.5}>no warnings</StatusText>
            <StatusText $after={17}>159 : 2</StatusText>
            <svg width="14" height="14" viewBox="0 0 14 14" fill="#bdbdbd">
              {[[12, 0], [8, 4], [12, 4], [4, 8], [8, 8], [12, 8], [0, 12], [4, 12], [8, 12], [12, 12]].map(([x, y]) => (
                <rect key={`${x}-${y}`} x={x} y={y} width="1.4" height="1.4" />
              ))}
            </svg>
          </StatusBar>
        </Client>
      </Window>
    </>
  );
}
